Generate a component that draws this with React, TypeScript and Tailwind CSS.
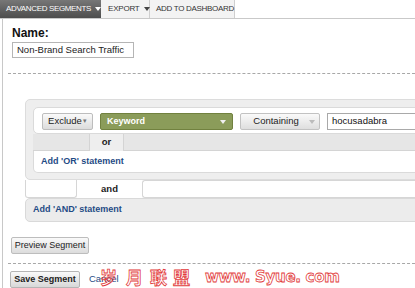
import React from "react";

const Arrow = ({ color = "#333" }: { color?: string }) => (
  <svg width="6" height="4" viewBox="0 0 6 4" className="inline-block shrink-0">
    <path d="M0 0 L6 0 L3 4 Z" fill={color} />
  </svg>
);

export default function App() {
  return (
    <div
      className="w-[415px] h-[288px] overflow-hidden bg-white relative text-[#222]"
      style={{ fontFamily: '"Liberation Sans", Arial, sans-serif' }}
    >
      {/* Tab bar */}
      <div className="flex h-[19px] border-b border-[#c9c9c9] bg-white whitespace-nowrap">
        <div className="flex items-center gap-[4px] pl-[6px] w-[101px] bg-gradient-to-b from-[#777] to-[#4d4d4d] text-white text-[8px] tracking-[-0.35px]">
          <span>ADVANCED SEGMENTS</span>
          <Arrow color="#fff" />
        </div>
        <div className="flex items-center gap-[4px] pl-[7px] w-[49px] bg-[#f3f3f3] border-r border-[#cfcfcf] text-[8px] tracking-[-0.2px] text-[#333]">
          <span>EXPORT</span>
          <Arrow color="#444" />
        </div>
        <div className="flex items-center pl-[6px] w-[85px] bg-[#f3f3f3] border-r border-[#cfcfcf] text-[8px] text-[#333] tracking-[-0.3px]">
          <span>ADD TO DASHBOARD</span>
        </div>
      </div>

      {/* Main with left rule */}
      <div className="ml-[2px] border-l border-[#c8c8c8] h-[269px] flex flex-col">
        <div className="ml-[9px] mt-[7px] text-[12px] leading-[14px] font-bold text-[#111]">Name:</div>
        <div className="ml-[9px] mt-[2px] w-[122px] h-[16px] border border-[#b5b5b5] flex items-center px-[4px] text-[9.5px] whitespace-nowrap">
          Non-Brand Search Traffic
        </div>
        <div className="ml-[5px] mt-[15px] border-t border-dashed border-[#a8a8a8] mr-[-10px]" />

        {/* OR panel */}
        <div className="ml-[22px] mt-[25px] mr-[-10px] bg-[#eeeeee] border border-[#dcdcdc] rounded-[5px] pt-[7px] pl-[7px] pb-[6px]">
          <div className="bg-white border border-[#dadada] rounded-l-[5px] h-[27px] flex items-start pt-[5px] pl-[8px] gap-[7px] whitespace-nowrap">
            <div className="w-[51px] h-[17px] rounded-[2px] border border-[#bdbdbd] bg-gradient-to-b from-[#fafafa] to-[#dcdcdc] flex items-center justify-center text-[9.5px] text-[#222]">
              <span>Exclude</span>
              <span className="text-[#777] text-[7px] ml-[1px]">▾</span>
            </div>
            <div className="w-[133px] h-[17px] rounded-[2px] border border-[#71813f] bg-[#8b9c5a] flex items-center justify-between px-[6px] text-[9px] font-bold text-white">
              <span>Keyword</span>
              <Arrow color="#f0f0f0" />
            </div>
            <div className="w-[80px] h-[17px] rounded-[2px] border border-[#c2c2c2] bg-gradient-to-b from-[#fafafa] to-[#dedede] flex items-center justify-center gap-[10px] pl-[8px] text-[9.5px] text-[#222]">
              <span>Containing</span>
              <Arrow color="#bbb" />
            </div>
            <div className="w-[90px] h-[17px] border border-[#a9a9a9] bg-white flex items-center px-[4px] text-[9.5px] text-[#111]">
              hocusadabra
            </div>
          </div>
          <div className="flex h-[17px]">
            <div className="w-[57px] bg-[#e6e6e6] border-r border-b border-[#d4d4d4]" />
            <div className="w-[33px] flex items-center justify-center text-[9.5px] font-bold text-[#222]">or</div>
            <div className="flex-1 bg-[#e6e6e6] border-l border-b border-[#d4d4d4]" />
          </div>
          <div className="bg-white border border-[#dadada] border-t-0 rounded-bl-[5px] h-[22px] flex items-center pl-[7px] text-[9px] font-bold text-[#1f4b85]">
            Add 'OR' statement
          </div>
        </div>

        {/* and row */}
        <div className="ml-[22px] mr-[-10px] flex h-[18px]">
          <div className="w-[52px] bg-white border-x border-b border-[#d6d6d6] rounded-b-[3px]" />
          <div className="w-[65px] flex items-center justify-center text-[9.5px] font-bold text-[#222]">and</div>
          <div className="flex-1 bg-white border-l border-y border-[#d6d6d6] rounded-l-[3px]" />
        </div>
        <div className="ml-[22px] mr-[-10px] h-[24px] bg-[#ececec] border border-[#d9d9d9] rounded-[5px] flex items-center pl-[7px] text-[9px] font-bold text-[#1f4b85]">
          Add 'AND' statement
        </div>

        <div className="ml-[8px] mt-[15px] w-[78px] h-[17px] rounded-[2px] border border-[#bdbdbd] bg-gradient-to-b from-[#fafafa] to-[#dcdcdc] flex items-center justify-center text-[9px] text-[#222] whitespace-nowrap">
          Preview Segment
        </div>
        <div className="ml-[5px] mt-[9px] border-t border-dashed border-[#a8a8a8] mr-[-10px]" />
        <div className="ml-[7px] mt-[7px] flex items-center gap-[9px] whitespace-nowrap">
          <div className="w-[70px] h-[17px] rounded-[2px] border border-[#b5b5b5] bg-gradient-to-b from-[#fafafa] to-[#d8d8d8] flex items-center justify-center text-[9px] font-bold text-[#222]">
            Save Segment
          </div>
          <span className="text-[9.5px] text-[#1f4b85]">Cancel</span>
        </div>
      </div>

      {/* watermark */}
      <div
        className="absolute left-[100px] top-[267px] flex items-center text-[17px] leading-[20px] font-bold text-transparent [-webkit-text-stroke:0.8px_#e23b3b] whitespace-nowrap"
        style={{ fontFamily: '"Noto Sans CJK SC", "DejaVu Sans", sans-serif' }}
      >
        <span className="mr-[9px]">岁</span>
        <span className="mr-[7px]">月</span>
        <span className="mr-[6px]">联</span>
        <span className="mr-[15px]">盟</span>
        <span className="text-[15px] tracking-[-0.3px]" style={{ fontFamily: '"DejaVu Sans", sans-serif' }}>www. Syue. com</span>
      </div>
    </div>
  );
}
